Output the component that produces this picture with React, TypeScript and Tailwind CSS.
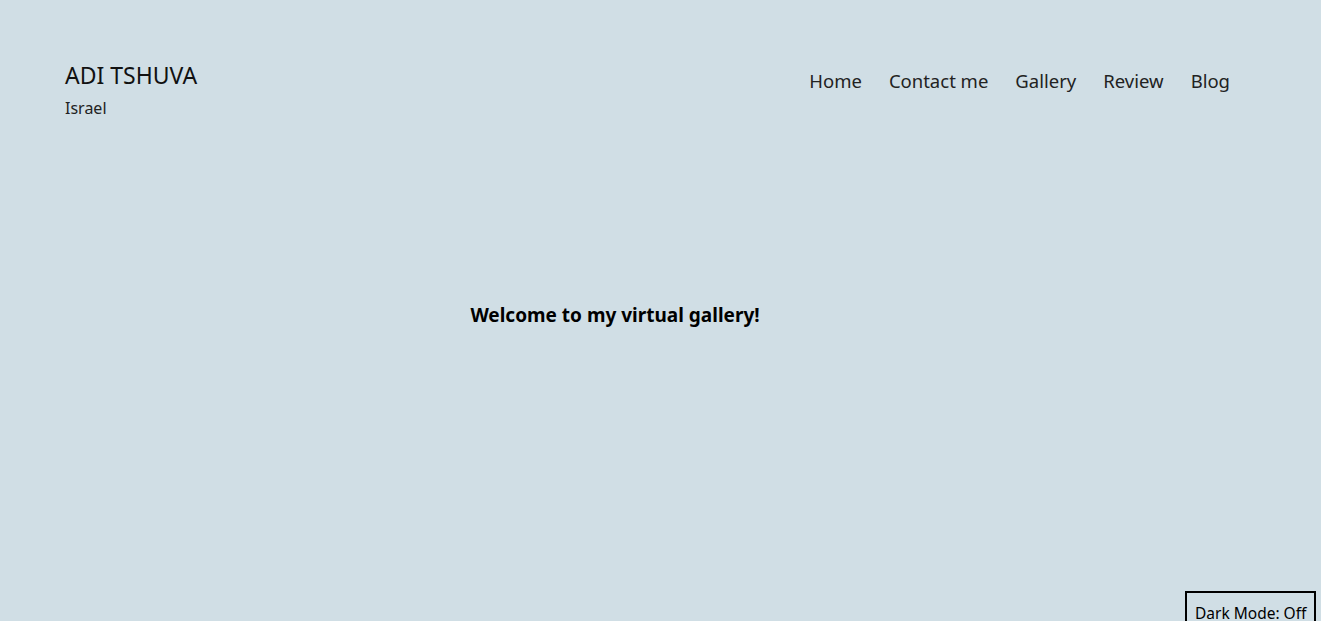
import React from "react";

const links = ["Home", "Contact me", "Gallery", "Review", "Blog"];

const App: React.FC = () => {
  return (
    <div
      className="relative w-full h-[621px] overflow-hidden bg-[#d0dee5] text-black"
      style={{ fontFamily: '"Noto Sans", "Open Sans", sans-serif' }}
    >
      <header className="flex justify-between items-start pl-[65px] pr-[91px] pt-[59px]">
        <div className="flex flex-col">
          <h1 className="text-[23px] leading-[32px] font-normal text-[#111]">ADI TSHUVA</h1>
          <p className="text-[16px] leading-[22px] mt-[6px] text-[#222]">Israel</p>
        </div>
        <nav className="flex gap-x-[27px] pt-[8px]">
          {links.map((l) => (
            <a key={l} href="#" className="text-[18.5px] leading-[28px] text-[#222]">
              {l}
            </a>
          ))}
        </nav>
      </header>
      <main className="w-[1230px] mt-[183px] text-center">
        <h2 className="text-[19px] leading-[26px] font-bold">Welcome to my virtual gallery!</h2>
      </main>
      <button className="absolute left-[1185px] top-[591px] border-2 border-black px-[8px] pt-[10px] pb-[8px] text-[15.5px] leading-[20px] bg-[#d0dee5]">
        Dark Mode: Off
      </button>
    </div>
  );
};

export default App;
